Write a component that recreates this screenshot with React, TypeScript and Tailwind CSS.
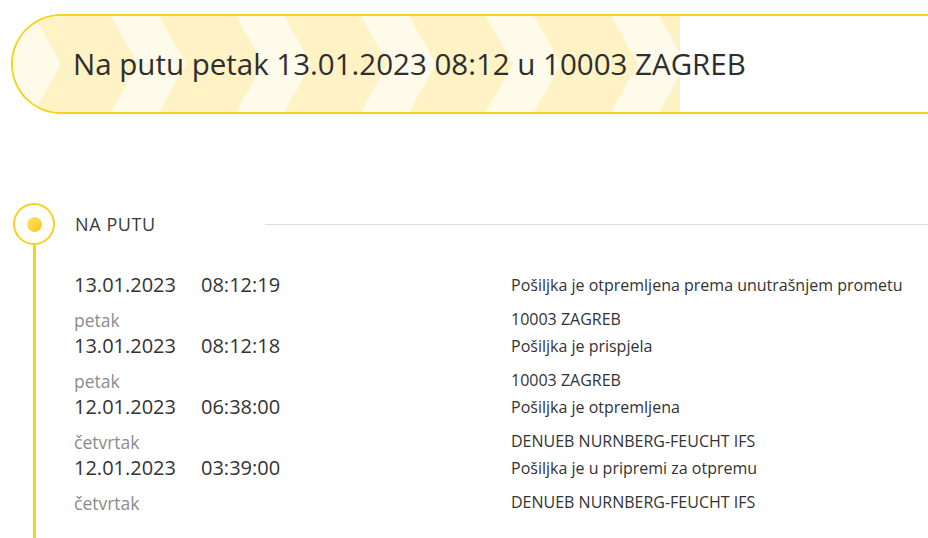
const events = [
  {
    date: "13.01.2023",
    time: "08:12:19",
    day: "petak",
    status: "Pošiljka je otpremljena prema unutrašnjem prometu",
    place: "10003 ZAGREB",
  },
  {
    date: "13.01.2023",
    time: "08:12:18",
    day: "petak",
    status: "Pošiljka je prispjela",
    place: "10003 ZAGREB",
  },
  {
    date: "12.01.2023",
    time: "06:38:00",
    day: "četvrtak",
    status: "Pošiljka je otpremljena",
    place: "DENUEB NURNBERG-FEUCHT IFS",
  },
  {
    date: "12.01.2023",
    time: "03:39:00",
    day: "četvrtak",
    status: "Pošiljka je u pripremi za otpremu",
    place: "DENUEB NURNBERG-FEUCHT IFS",
  },
];

function Chevrons() {
  // progress fill: pale stripes pointing right
  const starts = [21, 146, 271, 396, 521, 646];
  return (
    <svg width="667" height="96" viewBox="0 0 667 96" className="absolute left-0 top-0">
      <rect width="667" height="96" fill="#fffbea" />
      {starts.map((x) => (
        <polygon
          key={x}
          points={`${x},0 ${x + 77},0 ${x + 104},48 ${x + 77},96 ${x},96 ${x + 27},48`}
          fill="#fff3c6"
        />
      ))}
    </svg>
  );
}

function StatusBanner() {
  return (
    <div className="relative ml-[11px] mt-[14px] h-[100px] w-[960px] overflow-hidden rounded-l-[50px] border-2 border-r-0 border-[#f7d31c] bg-white">
      <Chevrons />
      <div className="relative flex h-full items-center pl-[60px] text-[29.5px] text-[#2e2e2e]">
        Na putu petak 13.01.2023 08:12 u 10003 ZAGREB
      </div>
    </div>
  );
}

export default function App() {
  return (
    <div
      className="h-[538px] w-[928px] overflow-hidden bg-white"
      style={{ fontFamily: '"Open Sans", "Noto Sans", sans-serif' }}
    >
      <StatusBanner />

      <div className="mt-[89px] flex pl-[13px]">
        <div className="flex w-[42px] flex-col items-center">
          <div className="flex h-[42px] w-[42px] items-center justify-center rounded-full border-2 border-[#f7d31c] bg-white">
            <div className="h-[15px] w-[15px] rounded-full bg-gradient-to-br from-[#ffe766] to-[#f5c400]" />
          </div>
          <div className="w-[3px] flex-1 bg-[#f7d31c]" />
        </div>

        <div className="ml-[19px] flex-1 pb-[40px]">
          <div className="flex h-[42px] items-center">
            <div className="w-[191px] pl-px text-[18px] tracking-[0.6px] text-[#3a3a3a]">NA PUTU</div>
            <div className="h-px flex-1 bg-[#dcdcdc]" />
          </div>

          <div className="mt-[27px]">
            {events.map((e, i) => (
              <div key={i} className="grid grid-cols-[127px_310px_1fr]">
                <div className="h-[26px] text-[20px] leading-[26px] text-[#333]">{e.date}</div>
                <div className="h-[26px] text-[20px] leading-[26px] text-[#333]">{e.time}</div>
                <div className="h-[26px] text-[16px] leading-[26px] text-[#333]">{e.status}</div>
                <div className="col-span-2 mt-[9px] h-[26px] text-[17.5px] leading-[26px] text-[#8c8c8c]">
                  {e.day}
                </div>
                <div className="mt-[8px] h-[26px] text-[16px] leading-[26px] text-[#333]">{e.place}</div>
              </div>
            ))}
          </div>
        </div>
      </div>
    </div>
  );
}
